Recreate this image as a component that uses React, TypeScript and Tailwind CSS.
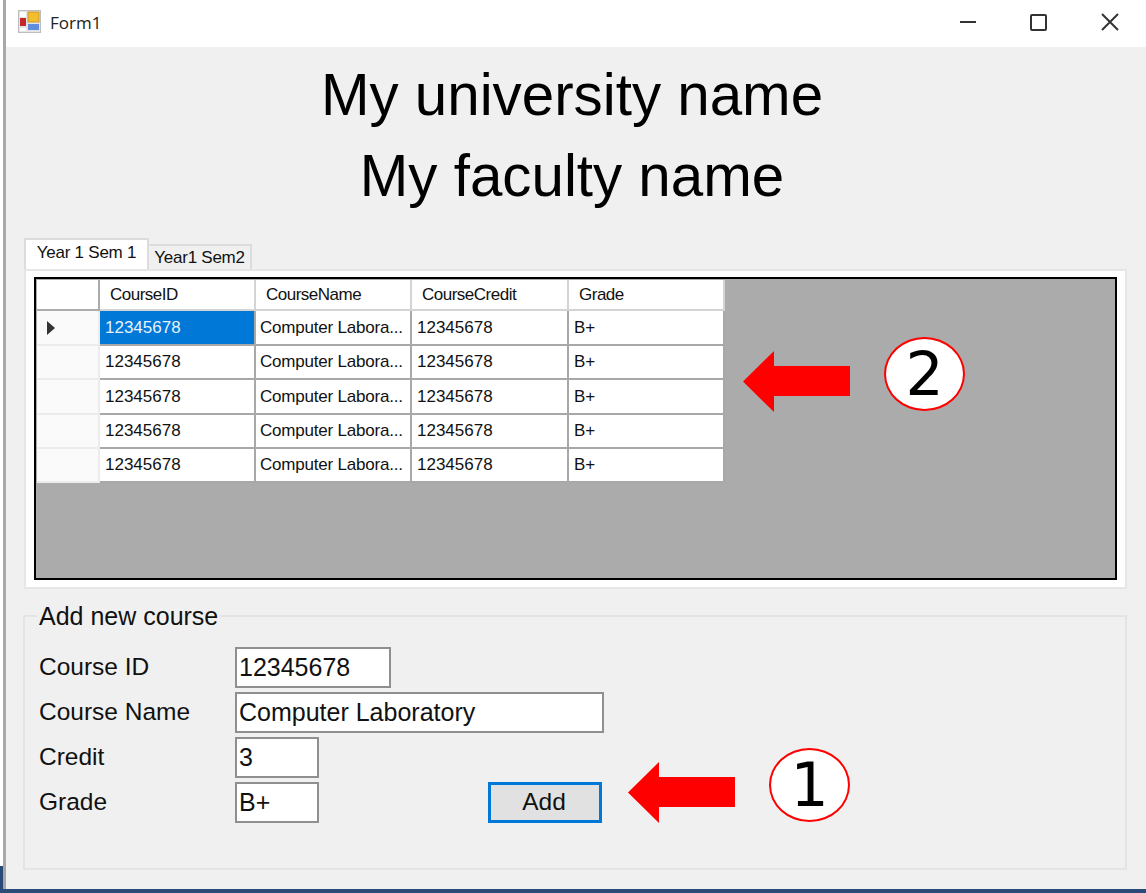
import React from "react";

const rows = ["h-[35px]", "h-[34px]", "h-[35px]", "h-[34px]", "h-[34px]"];

const Arrow = ({ className }: { className: string }) => (
  <svg className={className} width="107" height="62" viewBox="0 0 107 62">
    <path d="M0 30.500L31 0V15H107V45H31V61Z" fill="#ff0000" />
  </svg>
);

const Badge = ({ n, className }: { n: string; className: string }) => (
  <div
    className={`absolute w-[81px] h-[74px] rounded-[50%] bg-white border-2 border-[#ff0000] flex items-center justify-center text-[60px] leading-none text-black font-['DejaVu_Sans',sans-serif] ${className}`}
  >
    {n}
  </div>
);

const Field = ({ label, value, w }: { label: string; value: string; w: string }) => (
  <div className="flex items-center h-[41px]">
    <div className="w-[196px] text-[24.500px] text-[#111]">{label}</div>
    <div className={`h-[41px] ${w} border-2 border-[#8f8f8f] bg-white pl-[2px] flex items-center text-[25px] text-[#111]`}>
      {value}
    </div>
  </div>
);

const Cell = ({ children, w, selected, num }: { children: React.ReactNode; w: string; selected?: boolean; num?: boolean }) => (
  <div
    className={`${w} h-full shrink-0 border-r-2 border-b-2 border-[#a8a8a8] flex items-center whitespace-nowrap overflow-hidden text-[17px] ${
      num ? "pl-[5px] tracking-[0px]" : "pl-[4px] tracking-[-0.2px]"
    } ${selected ? "bg-[#0078d7] text-[#e8f2fb]" : "bg-white text-[#111]"}`}
  >
    {children}
  </div>
);

const HeadCell = ({ children, w }: { children: React.ReactNode; w: string }) => (
  <div className={`${w} h-full shrink-0 bg-white border-r-2 border-b-2 border-[#d4d4d4] pl-[10px] pt-[1px] flex items-center whitespace-nowrap text-[17px] tracking-[-0.5px] text-[#111]`}>
    {children}
  </div>
);

export default function App() {
  return (
    <div className="relative w-[1146px] h-[893px] overflow-hidden bg-white font-['Liberation_Sans',Arial,sans-serif]">
      <div className="h-[889px] ml-[3px] border-l-[3px] border-[#a8a8a8] flex flex-col">
        {/* title bar */}
        <div className="h-[47px] shrink-0 bg-white flex items-center pl-[12px] relative">
          <svg width="24" height="24" viewBox="0 0 24 24" className="mb-[3px]">
            <rect x="0.500" y="0.500" width="22" height="22" fill="#e4e4e4" stroke="#bdbdbd" />
            <rect x="2" y="2" width="6" height="5" fill="#fff" />
            <rect x="10" y="2" width="11" height="10" fill="#f3bd2e" stroke="#c99a2a" />
            <rect x="2" y="8" width="6" height="8" fill="#c4262e" />
            <rect x="10" y="14" width="11" height="6" fill="#5f8fdc" />
            <rect x="2" y="18" width="6" height="3" fill="#fff" />
          </svg>
          <span className="ml-[8px] text-[17px] text-[#222] font-['Open_Sans',sans-serif] mb-[1px]">Form1</span>
          <div className="ml-auto flex items-center gap-[47px] pr-[24px] mb-[3px]">
            <svg width="24" height="24" viewBox="0 0 24 24">
              <path d="M4 12H20" stroke="#333" strokeWidth="2" />
            </svg>
            <svg width="24" height="24" viewBox="0 0 24 24">
              <rect x="4" y="5" width="15" height="15" rx="1" fill="none" stroke="#333" strokeWidth="2" />
            </svg>
            <svg width="24" height="24" viewBox="0 0 24 24">
              <path d="M4 4L20 20M20 4L4 20" stroke="#333" strokeWidth="2" />
            </svg>
          </div>
        </div>

        {/* form body */}
        <div className="flex-1 bg-[#f0f0f0] pl-[17px] pr-[20px] flex flex-col">
          <div className="text-center text-[58.300px] leading-[81px] text-black h-[191px] pt-[7px] pr-[5px] whitespace-nowrap">
            <div>My university name</div>
            <div>My faculty name</div>
          </div>

          {/* tabs */}
          <div className="flex items-end h-[31px] pl-[1px]">
            <div className="w-[125px] h-[31px] pb-[3px] bg-white border-t-2 border-x-2 border-[#dcdcdc] text-[17px] tracking-[-0.25px] text-[#111] flex items-center justify-center">
              Year 1 Sem 1
            </div>
            <div className="w-[103px] h-[25px] bg-[#f0f0f0] border-t-2 border-r-2 border-[#dcdcdc] text-[17px] tracking-[-0.25px] text-[#111] flex items-center justify-center">
              Year1 Sem2
            </div>
          </div>

          {/* tab panel */}
          <div className="ml-[1px] w-[1103px] h-[320px] bg-white border-2 border-[#e6e6e6] pt-[6px] pl-[8px]">
            <div className="w-[1083px] h-[303px] bg-[#ababab] border-2 border-black">
              <div className="flex flex-col pl-[1px] pt-[1px]">
                <div className="flex h-[31px]">
                  <div className="w-[63px] h-full shrink-0 bg-white border-r-2 border-b-2 border-[#acacac]" />
                  <HeadCell w="w-[156px]">CourseID</HeadCell>
                  <HeadCell w="w-[156px]">CourseName</HeadCell>
                  <HeadCell w="w-[157px]">CourseCredit</HeadCell>
                  <HeadCell w="w-[156px]">Grade</HeadCell>
                </div>
                {rows.map((h, i) => (
                  <div key={i} className={`flex ${h}`}>
                    <div className="w-[63px] h-full shrink-0 bg-[#fafafa] border-r-2 border-b-2 border-[#ececec] flex items-center pl-[10px]">
                      {i === 0 && (
                        <svg width="8" height="14" viewBox="0 0 8 14">
                          <path d="M0 0L8 7L0 14Z" fill="#333" />
                        </svg>
                      )}
                    </div>
                    <Cell w="w-[156px]" num selected={i === 0}>12345678</Cell>
                    <Cell w="w-[156px]">Computer Labora...</Cell>
                    <Cell w="w-[157px]" num>12345678</Cell>
                    <Cell w="w-[156px]" num>B+</Cell>
                  </div>
                ))}
              </div>
            </div>
          </div>

          {/* group box */}
          <fieldset className="mt-[13px] w-[1104px] h-[268px] border-2 border-[#e4e4e4] pl-[14px] pt-[13px]">
            <legend className="text-[25px] leading-[28px] text-[#111] px-[2px] -ml-[2px]">Add new course</legend>
            <div className="relative flex flex-col gap-[4px] mt-[4px]">
              <Field label="Course ID" value="12345678" w="w-[156px]" />
              <Field label="Course Name" value="Computer Laboratory" w="w-[369px]" />
              <Field label="Credit" value="3" w="w-[84px]" />
              <Field label="Grade" value="B+" w="w-[84px]" />
              <div className="absolute left-[449px] top-[135px] w-[114px] h-[41px] bg-[#e1e1e1] border-[3px] border-[#0078d7] flex items-center justify-center text-[24.500px] text-[#111] pr-[2px]">
                Add
              </div>
            </div>
          </fieldset>
        </div>
      </div>
      <div className="absolute left-0 bottom-0 w-full h-[4px] bg-[#2a4a78]" />
      <div className="absolute left-0 top-[866px] w-[3px] h-[27px] bg-[#2a4a78]" />

      {/* annotations */}
      <Arrow className="absolute left-[743px] top-[351px]" />
      <Badge n="2" className="left-[884px] top-[337px]" />
      <Arrow className="absolute left-[628px] top-[762px]" />
      <Badge n="1" className="left-[769px] top-[748px]" />
    </div>
  );
}
